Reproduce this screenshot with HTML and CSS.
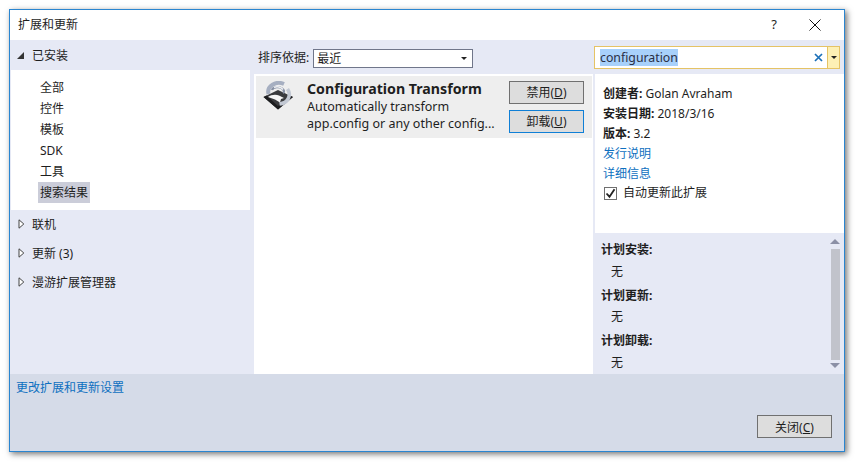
FILE: index.html
```html
<!DOCTYPE html>
<html lang="zh-CN">
<head>
<meta charset="utf-8">
<title>扩展和更新</title>
<link rel="stylesheet" href="styles.css">
</head>
<body>
<div class="window">
  <header class="titlebar">
    <span class="title">扩展和更新</span>
    <span class="help">?</span>
    <svg class="close" width="12" height="12" viewBox="0 0 12 12"><path d="M.5.5l11 11M11.5.5l-11 11" stroke="#111" fill="none"/></svg>
  </header>
  <main class="main">
    <nav class="left">
      <div class="node node-open"><svg class="arrow" width="7" height="7" viewBox="0 0 7 7"><path d="M7 0v7H0z" fill="#333"/></svg>已安装</div>
      <ul class="tree">
        <li>全部</li>
        <li>控件</li>
        <li>模板</li>
        <li>SDK</li>
        <li>工具</li>
        <li><span class="selected">搜索结果</span></li>
      </ul>
      <div class="node"><svg class="arrow" width="6" height="10" viewBox="0 0 6 10"><path d="M.5.8v8.4L5.3 5z" fill="#fff" stroke="#444"/></svg>联机</div>
      <div class="node"><svg class="arrow" width="6" height="10" viewBox="0 0 6 10"><path d="M.5.8v8.4L5.3 5z" fill="#fff" stroke="#444"/></svg>更新 (3)</div>
      <div class="node"><svg class="arrow" width="6" height="10" viewBox="0 0 6 10"><path d="M.5.8v8.4L5.3 5z" fill="#fff" stroke="#444"/></svg>漫游扩展管理器</div>
    </nav>
    <section class="middle">
      <div class="sortbar">
        <span>排序依据:</span>
        <div class="select"><span>最近</span><i class="caret"></i></div>
      </div>
      <div class="list">
        <article class="item">
          <svg class="ext-icon" width="31" height="29" viewBox="0 0 31 29">
            <path d="M.5 16L15 9l15 7-15 12.500z" fill="#3a3b3e"/>
            <path d="M.5 16l3-1.400L15 25l11.500-10.400L30 16 15 28.500z" fill="#1c1d1f"/>
            <path d="M5 16c3-2.500 8-3 11-1.500l5 2.500-3 1-1 3.500-5-3z" fill="#f7f7f7"/>
            <path d="M5.500 13C3.500 5 13-.5 21 3" stroke="#a6afc1" stroke-width="4" fill="none"/>
            <path d="M9 9c1-3 7-4 10-1.500 2 1.500 3 3 1 4.500" stroke="#8790a4" stroke-width="2.200" fill="none"/>
            <path d="M24.500 8c4 6 1 14-8 15" stroke="#c2c8d3" stroke-width="3.600" fill="none"/>
            <path d="M11 6.500c3-1.500 7-.5 9 2" stroke="#eef0f4" stroke-width="1.600" fill="none"/>
          </svg>
          <div class="item-text">
            <h3>Configuration Transform</h3>
            <p>Automatically transform</p>
            <p>app.config or any other config...</p>
          </div>
          <div class="item-actions">
            <button class="btn btn-item" type="button">禁用(<u>D</u>)</button>
            <button class="btn btn-item btn-focus" type="button">卸载(<u>U</u>)</button>
          </div>
        </article>
      </div>
    </section>
    <aside class="right">
      <div class="searchbar">
        <div class="search">
          <span class="query"><span class="hl">configuration</span></span>
          <svg class="clear" width="9" height="9" viewBox="0 0 9 9"><path d="M1 1l7 7M8 1L1 8" stroke="#1b70b8" stroke-width="1.700" fill="none"/></svg>
          <span class="search-drop"><i class="caret"></i></span>
        </div>
      </div>
      <div class="details">
        <div><b>创建者:</b> Golan Avraham</div>
        <div><b>安装日期:</b> 2018/3/16</div>
        <div><b>版本:</b> 3.2</div>
        <div><a class="link">发行说明</a></div>
        <div><a class="link">详细信息</a></div>
        <div class="check-row">
          <span class="check"><svg width="11" height="11" viewBox="0 0 11 11"><path d="M1.500 5.500l3 3.200 5-7.500" stroke="#222" stroke-width="1.800" fill="none"/></svg></span>
          <span>自动更新此扩展</span>
        </div>
      </div>
      <div class="plan">
        <div class="plan-text">
          <b>计划安装:</b><span class="none">无</span>
          <b>计划更新:</b><span class="none">无</span>
          <b>计划卸载:</b><span class="none">无</span>
        </div>
        <div class="scrollbar">
          <i class="sb-up"></i>
          <i class="sb-thumb"></i>
          <i class="sb-down"></i>
        </div>
      </div>
    </aside>
  </main>
  <footer class="footer">
    <a class="link">更改扩展和更新设置</a>
    <div class="footer-actions"><button class="btn" type="button">关闭(<u>C</u>)</button></div>
  </footer>
</div>
</body>
</html>
```
FILE: styles.css
```css
* { box-sizing: border-box; }
html, body { margin: 0; height: 100%; background: #fff; overflow: hidden; }
body {
  font-family: "Noto Sans", "Noto Sans CJK SC", sans-serif;
  font-size: 12px;
  color: #1e1e1e;
}
.window {
  margin: 9px 0 0 9px;
  width: 836px;
  height: 443px;
  border: 1px solid #2a85d0;
  background: #fff;
  box-shadow: 2px 2px 6px rgba(0, 0, 0, .55);
  display: flex;
  flex-direction: column;
}
.titlebar {
  height: 30px;
  flex: none;
  display: flex;
  align-items: center;
  padding: 0 23px 0 8px;
}
.title { flex: 1; position: relative; top: -1px; }
.help { font-size: 13px; margin-right: 32px; position: relative; top: -1px; }
.close { flex: none; }
.main { height: 334px; flex: none; display: flex; background: #e6e9f5; }
.left { width: 240px; flex: none; }
.node {
  height: 29px;
  display: flex;
  align-items: center;
  padding: 0 0 2px 8px;
  gap: 7px;
}
.node-open { height: 30px; padding: 0 0 0 7px; gap: 8px; }
.node .arrow { width: 7px; flex: none; }
.tree {
  list-style: none;
  margin: 0 0 0 1px;
  padding: 7px 0 0 29px;
  height: 140px;
  background: #fff;
}
.tree li { height: 21px; line-height: 21px; }
.selected { display: inline-block; background: #cbcdd9; padding: 0 2px; margin-left: -2px; }
.middle { width: 345px; flex: none; display: flex; flex-direction: column; }
.sortbar {
  height: 34px;
  flex: none;
  display: flex;
  align-items: center;
  padding-left: 8px;
  gap: 4px;
}
.select {
  width: 160px;
  height: 19px;
  margin-top: 2px;
  border: 1px solid #70768a;
  background: #fff;
  display: flex;
  align-items: center;
  justify-content: space-between;
  padding: 0 5px 0 3px;
}
.caret {
  width: 0;
  height: 0;
  border-left: 3px solid transparent;
  border-right: 3px solid transparent;
  border-top: 3px solid #222;
}
.list { flex: 1; margin: 0 2px 0 4px; background: #fff; padding: 2px 1px 0 2px; }
.item {
  height: 62px;
  background: #eeeeee;
  display: flex;
  padding: 5px 8px 0 7px;
}
.ext-icon { flex: none; margin-right: 13px; }
.item-text { flex: 1; min-width: 0; position: relative; top: -1px; }
.item-text h3 { margin: 0; font-size: 14.2px; font-weight: 700; line-height: 16px; padding-top: 1px; color: #1e1e1e; }
.item-text p { margin: 0; font-size: 12.5px; line-height: 17px; color: #1e1e1e; }
.item-text h3 + p { margin-top: 1px; }
.item-actions { flex: none; display: flex; flex-direction: column; gap: 6px; }
.btn {
  width: 75px;
  height: 23px;
  padding: 0;
  border: 1px solid #707070;
  background: #dddddd;
  font: inherit;
  color: #1e1e1e;
}
.btn-item { padding-bottom: 2px; }
.btn-focus { border-color: #0f7fd6; }
.right { flex: 1; min-width: 0; display: flex; flex-direction: column; }
.searchbar { height: 34px; flex: none; }
.search {
  margin: 6px 4px 0 -1px;
  height: 23px;
  border: 1px solid #e5c365;
  background: #fff;
  display: flex;
  align-items: center;
  padding-left: 5px;
  font-size: 12.300px;
}
.query { flex: 1; color: #2a2f45; }
.hl { background: #a8d1fb; display: inline-block; line-height: 17px; }
.clear { flex: none; margin-right: 4px; }
.search-drop {
  width: 12px;
  height: 100%;
  flex: none;
  background: #fdf0b5;
  border-left: 1px solid #e5c365;
  display: flex;
  align-items: center;
  justify-content: center;
}
.details { height: 159px; flex: none; background: #fff; padding: 10px 0 0 8px; }
.details div { line-height: 20px; height: 20px; }
.details b { font-weight: 700; }
.link { color: #0e70c0; }
.details .check-row { display: flex; align-items: center; gap: 6px; height: 18px; line-height: 18px; margin-left: 1px; }
.check { width: 13px; height: 13px; border: 1px solid #707070; background: #fff; display: flex; align-items: center; justify-content: center; }
.plan { flex: 1; display: flex; min-height: 0; }
.plan-text { flex: 1; padding: 5.4px 0 0 6px; display: flex; flex-direction: column; }
.plan-text b { height: 22.750px; line-height: 23px; }
.plan-text .none { height: 22.750px; line-height: 21px; padding-left: 10px; }
.scrollbar { width: 16px; flex: none; display: flex; flex-direction: column; align-items: center; background: #e6e9f5; position: relative; left: -1px; }
.sb-up { margin-top: 6px; width: 0; height: 0; border-left: 5px solid transparent; border-right: 5px solid transparent; border-bottom: 5px solid #8b90a6; }
.sb-thumb { flex: 1; width: 9px; background: #c1c3cb; margin: 5px 0 3px; }
.sb-down { margin-bottom: 6px; width: 0; height: 0; border-left: 5px solid transparent; border-right: 5px solid transparent; border-top: 5px solid #8b90a6; }
.footer { flex: 1; background: #d5dbe8; padding: 4px 0 0 6px; display: flex; flex-direction: column; }
.footer-actions { margin-top: auto; display: flex; justify-content: flex-end; padding: 0 12px 13px 0; }
```
